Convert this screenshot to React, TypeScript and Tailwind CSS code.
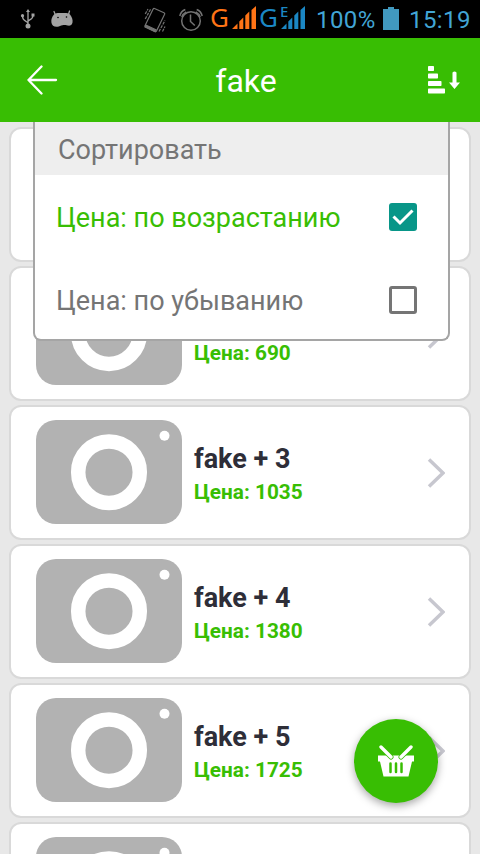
import { useState } from "react";

const ITEMS = [
    { id: 1, title: "fake", price: 345 },
    { id: 2, title: "fake + 2", price: 690 },
    { id: 3, title: "fake + 3", price: 1035 },
    { id: 4, title: "fake + 4", price: 1380 },
    { id: 5, title: "fake + 5", price: 1725 },
    { id: 6, title: "fake + 6", price: 2070 },
];

function UsbIcon() {
    return (
        <svg className="w-4 h-5 shrink-0" viewBox="0 0 16 20" fill="none" stroke="#a3a3a3" strokeWidth="1.3">
            <path d="M8 17V3M8 14.5C8 12 2.5 12.5 2.5 7.5M8 12.5C8 10.5 13 11 13 6.5" />
            <circle cx="8" cy="17" r="2.5" fill="#a3a3a3" stroke="none" />
            <circle cx="2.5" cy="6.7" r="1.6" fill="#a3a3a3" stroke="none" />
            <path d="M11.5 4.5h3v3h-3zM8 0l2 3H6z" fill="#a3a3a3" stroke="none" />
        </svg>
    );
}

function AndroidIcon() {
    return (
        <svg className="w-[22px] h-[18px] shrink-0" viewBox="0 0 22 18">
            <path
                d="M3 4.5C4.5 3.2 6 3 8.5 3h5c2.5 0 4 .3 5.5 1.5C21 7 22 10 21.5 12.5c-.5 3-3 3.5-5 3-2-.3-3-.5-5-.3s-3 1.3-5 1.5C3 17 .8 15.5.4 12.5 0 9.5 1 6.5 3 4.5z"
                fill="#a3a3a3"
            />
            <path d="M4.5 5L3 1.5M17.5 4.5L18.500 1" stroke="#a3a3a3" strokeWidth="1.3" strokeLinecap="round" />
            <circle cx="7" cy="7.5" r=".8" fill="#000" />
            <circle cx="15.5" cy="7" r=".8" fill="#000" />
        </svg>
    );
}

function VibrateIcon() {
    return (
        <svg className="w-[22px] h-[26px] shrink-0" viewBox="0 0 22 26" fill="none" stroke="#737373" strokeWidth="1.2">
            <path d="M10.5 1.5l9.5 4.2q1 .5.6 1.5L12.5 24q-.5 1-1.500.5L1.700 20q-1-.5-.6-1.500L9 2.200q.5-1 1.500-.7z" />
            <path d="M1.700 18l10.300 4.700-.9 2L1 20z" fill="#737373" />
            <path d="M1.200 7l2.800-5M1.200 12L7 1.500M15 24.500l6-11M18.500 24.500l2.500-5" strokeDasharray="3 1" />
        </svg>
    );
}

function AlarmIcon() {
    return (
        <svg className="w-6 h-6 shrink-0" viewBox="0 0 24 24" fill="none" stroke="#737373" strokeWidth="1.5">
            <circle cx="12" cy="13" r="9.3" />
            <path d="M11.5 6.5v7l4.3 4M.8 8C1.5 5 3.5 2.5 6.3 1.5M2.8 9C3.6 6.5 5 5 7.3 3.8M23.2 8c-.7-3-2.7-5.5-5.5-6.5M21.2 9c-.8-2.5-2.2-4-4.5-5.2" />
        </svg>
    );
}

function SignalIcon({ color }: { color: string }) {
    return (
        <svg className="w-6 h-[23px] shrink-0" viewBox="0 0 24 23" fill={color}>
            <path d="M0 23l5.5-5.5V23zM7.3 15.5l4-4V23h-4zM13.3 9.5l4-4V23h-4zM19.5 4L24 0v23h-4.5z" />
        </svg>
    );
}

function StatusBar() {
    return (
        <div className="h-[38px] shrink-0 bg-black flex items-start font-['Roboto',sans-serif] text-[#42a5d5]">
            <div className="flex items-center gap-[15px] h-[38px] pl-5">
                <UsbIcon />
                <AndroidIcon />
            </div>
            <div className="flex items-center gap-[13px] h-10 pl-[71px]">
                <VibrateIcon />
                <AlarmIcon />
            </div>
            <div className="flex h-[38px] pl-[7px] text-[26px] leading-[35px] font-['Noto_Sans',sans-serif]">
                <span className="w-[22px] text-[#ff7416]">G</span>
                <div className="pt-1.5">
                    <SignalIcon color="#ff7416" />
                </div>
                <span className="w-[25px] pl-[3px] text-[#1b87c4]">G</span>
                <div className="relative pt-1.5">
                    <SignalIcon color="#1b87c4" />
                    <span className="absolute left-[-1px] top-[3px] text-[15px] leading-[17px] font-medium text-[#1b87c4]">E</span>
                </div>
            </div>
            <span className="ml-[11px] w-[60px] text-[24px] leading-[40px] tracking-[0.4px] whitespace-nowrap">100%</span>
            <svg className="w-4 h-[23px] mt-[6.5px] ml-[7px] shrink-0" viewBox="0 0 16 23">
                <path d="M5 0h6v2h5v21H0V2h5z" fill="#4199bf" />
            </svg>
            <span className="ml-[10px] text-[24px] leading-[40px] tracking-[0.4px]">15:19</span>
        </div>
    );
}

function Placeholder() {
    return (
        <svg className="w-[146px] h-[104px] shrink-0" viewBox="0 0 146 104">
            <rect width="146" height="104" rx="20" fill="#b2b2b2" />
            <circle cx="73" cy="52.2" r="30.8" fill="none" stroke="#fff" strokeWidth="14.5" />
            <circle cx="128.5" cy="15.7" r="5" fill="#fff" />
        </svg>
    );
}

function ProductCard({ title, price }: { title: string; price: number }) {
    return (
        <div className="h-[135px] shrink-0 flex items-center bg-white border-2 border-[#d9d9d9] rounded-xl pl-[25px] pr-6 pb-px">
            <Placeholder />
            <div className="ml-3 mt-[3px] flex-1 font-bold">
                <div className="text-[27px] leading-[32px] text-[#2e2e38]">{title}</div>
                <div className="mt-1 text-[20.8px] leading-[26px] text-[#38be03]">Цена: {price}</div>
            </div>
            <svg className="w-[18px] h-[30px] mt-px shrink-0" viewBox="0 0 18 30" fill="none" stroke="#c7c7cf" strokeWidth="3.5">
                <path d="M2 1.5L16 15 2 28.5" />
            </svg>
        </div>
    );
}

interface SortRowProps {
    label: string;
    checked: boolean;
    onClick: () => void;
}

function SortRow({ label, checked, onClick }: SortRowProps) {
    return (
        <button
            onClick={onClick}
            className={`w-full h-[83px] flex items-center justify-between pl-[21px] pr-[31px] text-[27px] ${checked ? "text-[#38be03]" : "text-[#757575]"}`}
        >
            <span className="pt-[3px] whitespace-nowrap">{label}</span>
            {checked ? (
                <svg className="w-7 h-7 shrink-0" viewBox="0 0 28 28">
                    <rect width="28" height="28" rx="3" fill="#089688" />
                    <path d="M4.5 13.5l6.5 6.5L23.5 7.5" fill="none" stroke="#fff" strokeWidth="3" />
                </svg>
            ) : (
                <span className="w-7 h-7 shrink-0 border-3 border-[#757575] rounded-[3px]" />
            )}
        </button>
    );
}

export default function App() {
    const [sort, setSort] = useState("asc");

    return (
        <div className="w-[480px] h-[854px] flex flex-col overflow-hidden bg-[#e8e8e8] font-['Roboto',sans-serif]">
            <StatusBar />

            {/* Toolbar */}
            <header className="h-[84px] shrink-0 bg-[#38be03] flex items-center justify-between pl-[27px] pr-5 text-white">
                <svg className="w-[33px] h-[30px]" viewBox="0 0 33 30" fill="none" stroke="#fff" strokeWidth="2.3" strokeLinecap="round" strokeLinejoin="round">
                    <path d="M14.5 1.5L1.5 15l13 13.5M1.5 15H29" />
                </svg>
                <h1 className="pl-1 pt-0.5 text-[32px] leading-[38px]">fake</h1>
                <svg className="w-8 h-7" viewBox="0 0 32 28" fill="#fff">
                    <rect y="0" width="6" height="5" rx=".7" />
                    <rect y="7.5" width="10" height="5" rx=".7" />
                    <rect y="15" width="13.5" height="5" rx=".7" />
                    <rect y="22.5" width="17" height="5" rx=".7" />
                    <path d="M24.5 6.500q2-2 4 0v10H32L26.500 23 21 16.500h3.500z" />
                </svg>
            </header>

            {/* Product list */}
            <main className="relative flex-1 min-h-0 overflow-hidden">
                <div className="flex flex-col gap-1 px-[9px] pt-[5px]">
                    {ITEMS.map((item) => (
                        <ProductCard key={item.id} title={item.title} price={item.price} />
                    ))}
                </div>

                {/* Sort menu */}
                <div className="absolute left-[33px] top-0 w-[417px] h-[219px] bg-white border-2 border-t-0 border-[#a5a5a5] rounded-b-lg overflow-hidden">
                    <div className="h-[53px] bg-[#eee] pl-[23px] text-[27px] leading-[57px] text-[#757575]">Сортировать</div>
                    <SortRow label="Цена: по возрастанию" checked={sort === "asc"} onClick={() => setSort("asc")} />
                    <SortRow label="Цена: по убыванию" checked={sort === "desc"} onClick={() => setSort("desc")} />
                </div>

                {/* Basket */}
                <button className="absolute left-[354px] top-[597px] size-[84px] rounded-full bg-[#38be03] shadow-[0_3px_8px_rgba(0,0,0,0.35)] flex items-center justify-center">
                    <svg className="w-9 h-8" viewBox="0 0 36 32" fill="none" stroke="#fff">
                        <path d="M0 10.5h36v6h-2l-3.500 15h-25L2 16.500H0z" fill="#fff" stroke="none" />
                        <path d="M3 2l10 10M33 2L23 12" stroke="#38be03" strokeWidth="5" strokeLinecap="round" />
                        <path d="M3 2l10 10M33 2L23 12" strokeWidth="3.4" strokeLinecap="round" />
                        <path d="M12.5 18.500v8.500M18 18.500v8.500M23.500 18.500v8.500" stroke="#38be03" strokeWidth="2.5" strokeLinecap="round" />
                    </svg>
                </button>
            </main>
        </div>
    );
}
